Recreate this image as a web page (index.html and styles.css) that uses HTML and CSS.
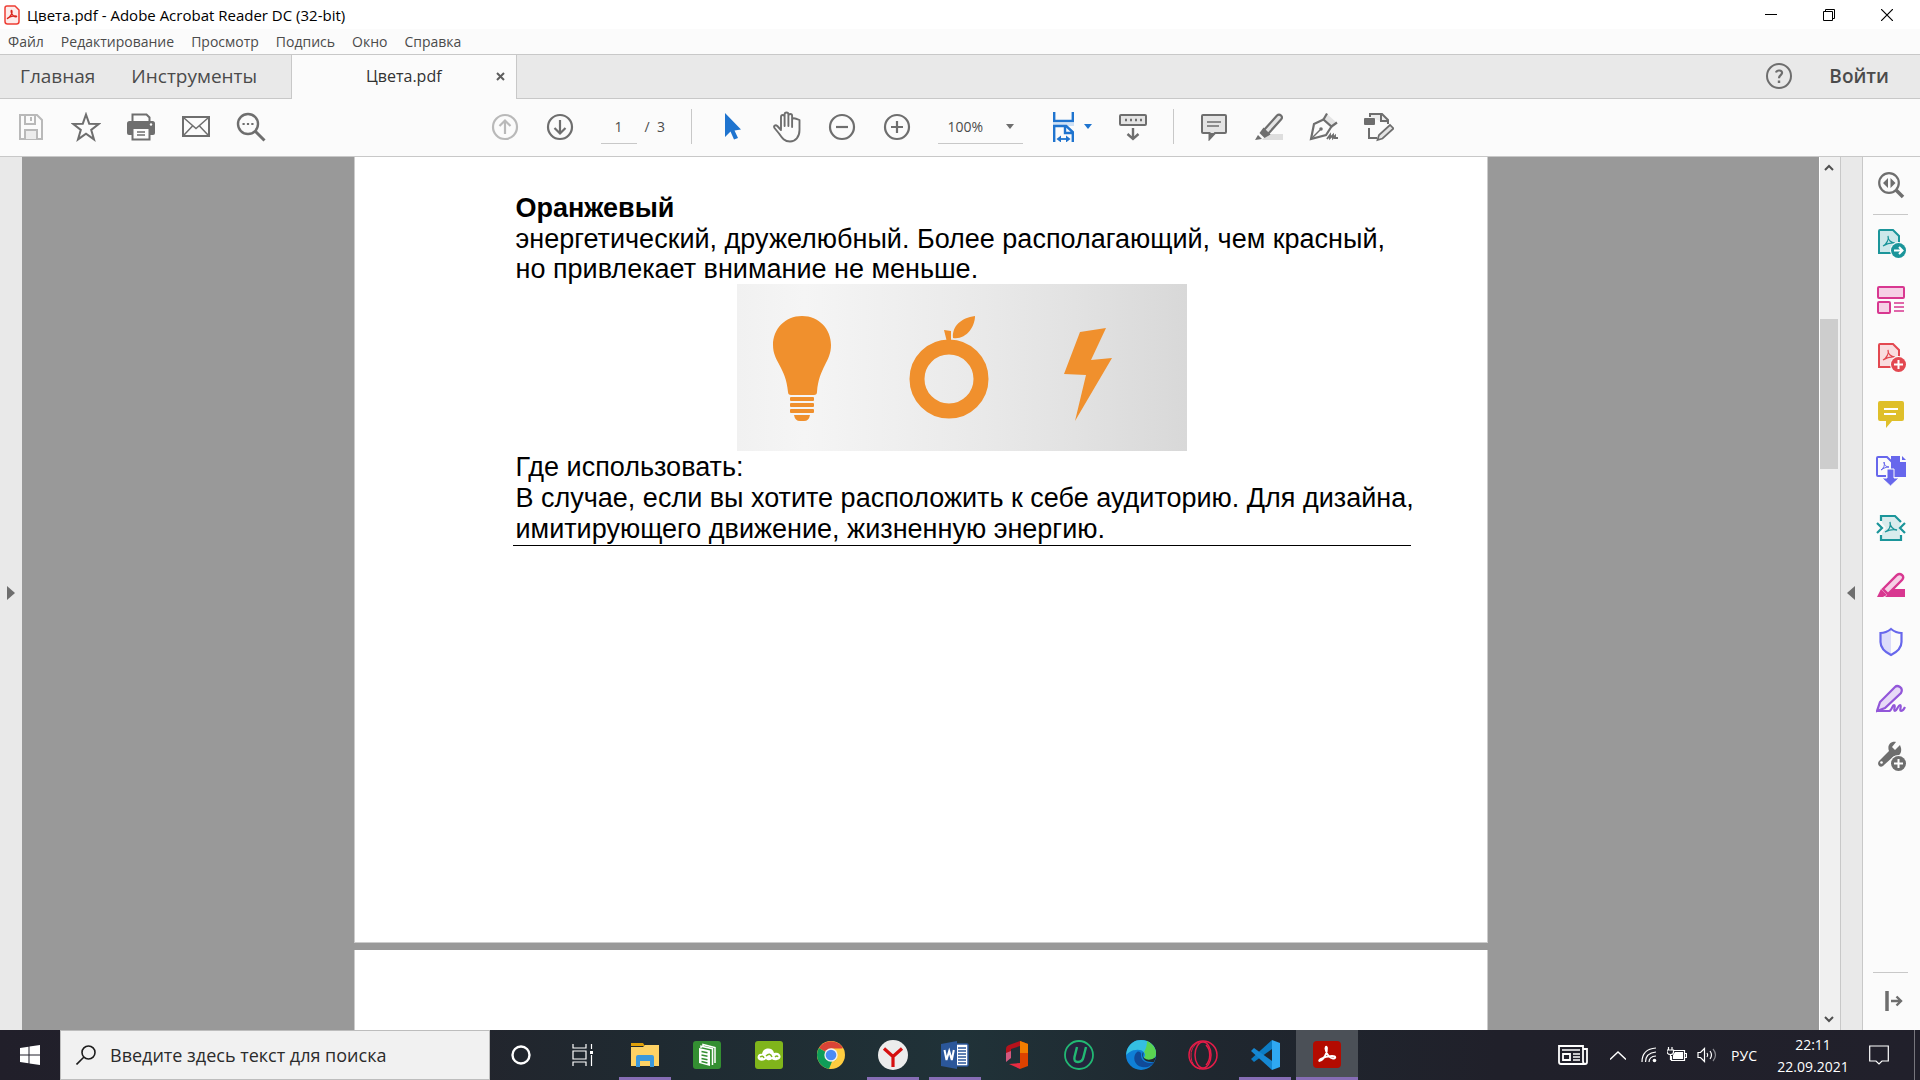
FILE: index.html
```html
<!DOCTYPE html>
<html lang="ru">
<head>
<meta charset="utf-8">
<title>Цвета.pdf - Adobe Acrobat Reader DC (32-bit)</title>
<link rel="stylesheet" href="styles.css">
</head>
<body>
<div class="app">
  <header class="titlebar">
    <svg class="app-icon" width="16" height="20" viewBox="0 0 16 20"><path d="M3 1h8l4 4v11.500q0 2.500-2.500 2.500h-9Q1 19 1 16.500V3q0-2 2-2z" fill="#fdeceb" stroke="#ee3e34" stroke-width="1.500"/><path d="M3.500 13.500c3-1.500 5-5.500 4.500-7.500-.8-1.500-1.500.5 0 3 1.300 2.200 3 3.200 4.500 2.700.8-1-3-1.500-8 .8-1 .5-1.200 1-1 1z" fill="none" stroke="#d9251c" stroke-width="1.300"/></svg>
    <h1 class="title">Цвета.pdf - Adobe Acrobat Reader DC (32-bit)</h1>
    <div class="window-buttons">
      <button class="win-btn" aria-label="Свернуть"><svg width="12" height="12" viewBox="0 0 12 12"><path d="M0 5.500h12" stroke="#000"/></svg></button>
      <button class="win-btn" aria-label="Восстановить"><svg width="12" height="12" viewBox="0 0 12 12" fill="none" stroke="#000"><path d="M.5 2.500h9v9h-9zM2.500 2.500v-2h9v9h-2"/></svg></button>
      <button class="win-btn" aria-label="Закрыть"><svg width="12" height="12" viewBox="0 0 12 12"><path d="M0 0l12 12M12 0L0 12" stroke="#000" stroke-width="1.200"/></svg></button>
    </div>
  </header>

  <nav class="menubar">
    <button>Файл</button><button>Редактирование</button><button>Просмотр</button><button>Подпись</button><button>Окно</button><button>Справка</button>
  </nav>

  <div class="tabbar">
    <div class="main-tabs">
      <button class="tab-link">Главная</button>
      <button class="tab-link">Инструменты</button>
    </div>
    <div class="doc-tab">
      <button class="doc-name">Цвета.pdf</button>
      <button class="doc-close" aria-label="Закрыть вкладку"><svg width="9" height="9" viewBox="0 0 9 9"><path d="M1 1l7 7M8 1L1 8" stroke="#5e5e5e" stroke-width="2"/></svg></button>
    </div>
    <div class="account">
      <button class="help" aria-label="Справка"><svg width="28" height="28" viewBox="0 0 28 28" fill="none" stroke="#6e6e6e" stroke-width="2"><circle cx="14" cy="14" r="12"/><path d="M11 10.500c1-3 6.500-2.500 6 .7-.3 2-3 2-3 5" stroke-width="2.200"/><path d="M14 18.500v2.500" stroke-width="2.400"/></svg></button>
      <button class="sign-in">Войти</button>
    </div>
  </div>

  <div class="toolbar">
    <div class="tool-group">
      <button class="tool" aria-label="Сохранить"><svg width="28" height="28" viewBox="0 0 28 28" fill="none" stroke="#b9b9b9" stroke-width="2"><path d="M3 2h17l5 5v19H3z"/><path d="M8 2v9h10V2"/><path d="M8 26v-9h12v9" fill="#ececec"/><path d="M14 4v4" /></svg></button>
      <button class="tool" aria-label="Избранное"><svg width="30" height="30" viewBox="0 0 30 30"><path d="M15 2.500l3.200 9.200 9.800.2-7.800 6 2.800 9.500-8-5.700-8 5.700 2.800-9.500-7.800-6 9.800-.2z" fill="none" stroke="#6e6e6e" stroke-width="2"/></svg></button>
      <button class="tool" aria-label="Печать"><svg width="28" height="28" viewBox="0 0 28 28"><path d="M5.500 9V1.500h14l3 3V9" fill="#fbfbfb" stroke="#6e6e6e" stroke-width="2"/><path d="M2.500 8h23Q28 8 28 10.500V20q0 2-2 2H2q-2 0-2-2v-9.500Q0 8 2.500 8z" fill="#6e6e6e"/><path d="M5.500 15h17v11.500h-17z" fill="#fbfbfb" stroke="#6e6e6e" stroke-width="2"/><path d="M10 19h8M10 22h8" stroke="#6e6e6e" stroke-width="1.400"/><circle cx="24" cy="11.500" r="1.200" fill="#fbfbfb"/></svg></button>
      <button class="tool" aria-label="Отправить по почте"><svg width="28" height="28" viewBox="0 0 28 28" fill="none" stroke="#6e6e6e"><path d="M1 4h26v19H1z" stroke-width="2"/><path d="M2 5l12 10.500L26 5M2 22l8.500-9M26 22l-8.500-9" stroke-width="1.500"/></svg></button>
      <button class="tool" aria-label="Найти"><svg width="30" height="30" viewBox="0 0 30 30" fill="none" stroke="#6e6e6e"><circle cx="12" cy="12" r="10" stroke-width="2.400"/><path d="M19.500 19.500l9 9" stroke-width="3"/><path d="M6.500 12h11" stroke-width="2.200" stroke-dasharray="2.200 2.200"/></svg></button>
    </div>
    <div class="tool-group">
      <button class="tool" aria-label="Предыдущая страница"><svg width="28" height="28" viewBox="0 0 28 28" fill="none" stroke="#b9b9b9" stroke-width="2.200"><circle cx="14" cy="14" r="12"/><path d="M14 21V8M8.500 13L14 7.500l5.500 5.500"/></svg></button>
      <button class="tool" aria-label="Следующая страница"><svg width="28" height="28" viewBox="0 0 28 28" fill="none" stroke="#6e6e6e" stroke-width="2.200"><circle cx="14" cy="14" r="12"/><path d="M14 7v13M8.500 15l5.500 5.500 5.500-5.500"/></svg></button>
      <div class="pager">
        <input class="page-input" type="text" value="1" aria-label="Номер страницы">
        <span class="page-total">/&nbsp; 3</span>
      </div>
      <span class="separator"></span>
      <button class="tool" aria-label="Выделение"><svg width="28" height="30" viewBox="0 0 28 30"><path d="M7 1v24l5.500-5.500L16 27.500l4-1.500-3.500-7.500 6.500-1z" fill="#1f74cf"/></svg></button>
      <button class="tool" aria-label="Рука"><svg width="30" height="32" viewBox="0 0 30 32" fill="none" stroke="#6e6e6e" stroke-width="1.900" stroke-linejoin="round" stroke-linecap="round"><path d="M9 18V6q0-2 1.800-2t1.800 2v9V3.500Q12.600 1.500 14.500 1.500t1.900 2V15 5q0-2 1.900-2t1.800 2v11V9q0-1.800 1.700-1.800T27.500 9v10c0 7-4 11.500-9.500 11.500S10 27 7 22.500L2.500 17c-1.300-2.200 1-3.500 2.800-2L9 19"/></svg></button>
      <button class="tool" aria-label="Уменьшить"><svg width="28" height="28" viewBox="0 0 28 28" fill="none" stroke="#6e6e6e" stroke-width="2.200"><circle cx="14" cy="14" r="12"/><path d="M8 14h12"/></svg></button>
      <button class="tool" aria-label="Увеличить"><svg width="28" height="28" viewBox="0 0 28 28" fill="none" stroke="#6e6e6e" stroke-width="2.200"><circle cx="14" cy="14" r="12"/><path d="M8 14h12M14 8v12"/></svg></button>
      <div class="zoom">
        <select class="zoom-select" aria-label="Масштаб"><option>100%</option></select>
        <svg width="8" height="5" viewBox="0 0 8 5"><path d="M0 0h8L4 5z" fill="#6e6e6e"/></svg>
      </div>
      <button class="tool tool-fit" aria-label="По ширине"><svg width="28" height="30" viewBox="0 0 28 30"><path d="M4.200 0v9h18.600V0" fill="none" stroke="#1f74cf" stroke-width="2.400"/><path d="M3 11h21v3H3z" fill="#cfe1f5"/><path d="M4.200 30V14h12l6.600 6v10M15 14v7h8" fill="none" stroke="#1f74cf" stroke-width="2.400"/><path d="M10 27h8" stroke="#1f74cf" stroke-width="1.800"/><path d="M11 23.500v7L6.500 27zM16 23.500v7l4.500-3.500z" fill="#1f74cf"/></svg><svg width="8" height="5" viewBox="0 0 8 5"><path d="M0 0h8L4 5z" fill="#1f74cf"/></svg></button>
      <button class="tool" aria-label="Панель прокрутки"><svg width="28" height="28" viewBox="0 0 28 28" fill="none" stroke="#6e6e6e"><rect x="1" y="2" width="26" height="10" rx="1" fill="#e4e4e4" stroke-width="2"/><path d="M6 7h17" stroke-width="2.500" stroke-dasharray="2 3"/><path d="M14 15v11M8.500 21l5.500 5 5.500-5" stroke-width="2.400"/></svg></button>
      <span class="separator"></span>
      <button class="tool" aria-label="Комментарий"><svg width="28" height="28" viewBox="0 0 28 28"><path d="M3 2h22q1 0 1 1v16q0 1-1 1H15l-5.500 6v-6H3q-1 0-1-1V3q0-1 1-1z" fill="#e4e4e4" stroke="#6e6e6e" stroke-width="2"/><path d="M9.500 20v6.500l6-6.500z" fill="#6e6e6e"/><path d="M7 9h14M7 13h12" stroke="#6e6e6e" stroke-width="1.300"/></svg></button>
      <button class="tool" aria-label="Выделить текст"><svg width="28" height="28" viewBox="0 0 28 28"><path d="M12 21h16v6H7z" fill="#dedede"/><path d="M9 17L22 2.500q2-2 4 0t0 4L13 21z" fill="#e4e4e4" stroke="#6e6e6e" stroke-width="2.200"/><path d="M8.500 14.500l7 7-6 3.500-5-5z" fill="#6e6e6e"/><path d="M3 22l4 4-7 1z" fill="#6e6e6e"/></svg></button>
      <button class="tool" aria-label="Подписать"><svg width="30" height="30" viewBox="0 0 30 30" fill="none" stroke="#6e6e6e" stroke-width="2.200"><path d="M18 2l9 8-4 4-8-7z" fill="#e4e4e4" stroke="none"/><path d="M18 1.500l-3.500 6 8 7 5.500-4" /><path d="M14.500 7.500L5 12 2 27l15-4 5.500-8.500"/><path d="M2 27l9-9" stroke-width="1.400"/><circle cx="12" cy="17" r="1.800" fill="#6e6e6e" stroke="none"/><path d="M18 27l3-4v3l3-3v3l2-2v2h3" stroke-width="1.900"/></svg></button>
      <button class="tool" aria-label="Другие инструменты"><svg width="30" height="30" viewBox="0 0 30 30" fill="none" stroke="#6e6e6e" stroke-width="2"><path d="M6 5V2h12l6 6v4" fill="#ededed"/><path d="M17 2v7h7M5 16v10h8"/><rect x="0" y="6" width="11" height="7" rx="1" fill="#6e6e6e" stroke="none"/><path d="M13.500 28l1.500-5 11-10 3.500 3.500-11 10z" fill="#e4e4e4" stroke-width="1.700"/></svg></button>
    </div>
  </div>

  <main class="workspace">
    <button class="side-toggle" aria-label="Показать панель навигации"><svg width="8" height="14" viewBox="0 0 8 14"><path d="M0 0v14l8-7z" fill="#6e6e6e"/></svg></button>
    <div class="canvas">
      <article class="sheet sheet-current">
        <h2 class="heading">Оранжевый</h2>
        <p class="intro">энергетический, дружелюбный. Более располагающий, чем красный,<br>но привлекает внимание не меньше.</p>
        <figure class="figure">
          <svg width="450" height="167" viewBox="0 0 450 167" fill="#f0902d" role="img" aria-label="Лампочка, апельсин, молния">
            <path d="M65 32c17 0 29 13 29 29 0 17-12 22-14 47q0 3-3 3H54q-3 0-3-3C49 83 36 78 36 61c0-16 12-29 29-29z"/>
            <rect x="53" y="113" width="24" height="4" rx="1"/><rect x="53" y="119" width="24" height="4" rx="1"/><rect x="53" y="125" width="24" height="4" rx="1"/>
            <path d="M57 131h16q-1 6-6 6h-4q-5 0-6-6z"/>
            <circle cx="212" cy="95" r="32" fill="none" stroke="#f0902d" stroke-width="15"/>
            <path d="M207 46l7 1v11h-4zM216 54c-1-12 8-20 22-22 0 11-9 24-22 22z"/>
            <path d="M343 48l26-4-15 32 21-2-37 63 11-46-22-1z"/>
          </svg>
        </figure>
        <p class="usage">Где использовать:<br>В случае, если вы хотите расположить к себе аудиторию. Для дизайна,<br>имитирующего движение, жизненную энергию.</p>
      </article>
      <article class="sheet sheet-next"></article>
    </div>
    <div class="scrollbar">
      <svg class="scroll-arrow" width="10" height="8" viewBox="0 0 10 8"><path d="M1 7l4-4 4 4" fill="none" stroke="#505050" stroke-width="2"/></svg>
      <div class="scroll-thumb"></div>
      <svg class="scroll-arrow scroll-down" width="10" height="8" viewBox="0 0 10 8"><path d="M1 1l4 4 4-4" fill="none" stroke="#505050" stroke-width="2"/></svg>
    </div>
    <button class="side-toggle side-right" aria-label="Скрыть панель инструментов"><svg width="8" height="14" viewBox="0 0 8 14"><path d="M8 0v14L0 7z" fill="#6e6e6e"/></svg></button>
    <aside class="tools-pane">
      <button aria-label="Поиск"><svg width="30" height="30" viewBox="0 0 30 30"><circle cx="13" cy="13" r="9.800" fill="none" stroke="#6e6e6e" stroke-width="2.200"/><path d="M20 20l7 7" stroke="#6e6e6e" stroke-width="3.600"/><path d="M12 8v10l-5-5zM14.500 8v10l5-5z" fill="#6e6e6e"/></svg></button>
      <span class="pane-rule"></span>
      <button aria-label="Экспорт PDF"><svg width="30" height="30" viewBox="0 0 30 30"><path d="M4 2h13l6 6v17H3V3q0-1 1-1z" fill="#cde8ea" stroke="#1b959a" stroke-width="2"/><path d="M7 18c4-2 6-7 5-10 0 4 3 7 7 7-4-.5-8 .5-12 3z" fill="none" stroke="#1b959a" stroke-width="1.200"/><circle cx="22.500" cy="22.500" r="8.500" fill="#fbfbfb"/><circle cx="22.500" cy="22.500" r="7.500" fill="#1b959a"/><path d="M18 22.500h8M23 19l3.500 3.500L23 26" fill="none" stroke="#fff" stroke-width="2"/></svg></button>
      <button aria-label="Систематизировать"><svg width="30" height="30" viewBox="0 0 30 30" fill="#f6d0e6" stroke="#d83790" stroke-width="2"><rect x="2" y="2" width="26" height="11" rx="1"/><rect x="2" y="17" width="12" height="11" rx="1"/><path d="M18 18h10M18 22h10M18 26h10" stroke-width="1.300"/></svg></button>
      <button aria-label="Создать PDF"><svg width="30" height="30" viewBox="0 0 30 30"><path d="M4 2h13l6 6v17H3V3q0-1 1-1z" fill="#f9dcde" stroke="#e34850" stroke-width="2"/><path d="M7 18c4-2 6-7 5-10 0 4 3 7 7 7-4-.5-8 .5-12 3z" fill="none" stroke="#e34850" stroke-width="1.200"/><circle cx="22.500" cy="22.500" r="8.500" fill="#fbfbfb"/><circle cx="22.500" cy="22.500" r="7.500" fill="#e34850"/><path d="M18 22.500h9M22.500 18v9" stroke="#fff" stroke-width="2"/></svg></button>
      <button aria-label="Добавить комментарий"><svg width="30" height="30" viewBox="0 0 30 30"><path d="M4 2h22q2 0 2 2v16q0 2-2 2H16l-6 7v-7H4q-2 0-2-2V4q0-2 2-2z" fill="#dfbf2a"/><path d="M8 10h14M8 15h12" stroke="#fff" stroke-width="2"/></svg></button>
      <button aria-label="Объединить файлы"><svg width="30" height="30" viewBox="0 0 30 30"><path d="M15 0h9v6h6v15H15z" fill="#6767ec"/><path d="M26 0l4 4h-4z" fill="#6767ec"/><path d="M10 20H2q-1 0-1-1V2q0-1 1-1h9l5 5v8" fill="#fbfbfb" stroke="#6767ec" stroke-width="2"/><path d="M5 14c3-2 4-5 3-8 0 3 2 5 5 5-3 0-5 1-8 3z" fill="none" stroke="#6767ec"/><path d="M11 13h7v9h5l-8.500 8L6 22h5z" fill="#6767ec" stroke="#fbfbfb"/></svg></button>
      <button aria-label="Сжать PDF"><svg width="30" height="30" viewBox="0 0 30 30" fill="none" stroke="#1b959a" stroke-width="2.200"><path d="M6 4h13l5 5v17H6v-6l4-5-4-5z" fill="#d9eced" stroke="none"/><path d="M1 10l5 5-5 5M29 10l-5 5 5 5M5 8V3h14l6 6M5 22v5h20v-5"/><path d="M9 19c4-2 6-6 5-10 0 4 3 8 7 8-4-1-8 0-12 2z" stroke-width="1.300"/></svg></button>
      <button aria-label="Редактировать PDF"><svg width="30" height="30" viewBox="0 0 30 30"><path d="M17 19h12v8H9z" fill="#d83790"/><path d="M7 19L21 5q2.500-2 5 0t0 5L12 24z" fill="#f6d0e6" stroke="#d83790" stroke-width="2.400"/><path d="M5 19l6 6-4 2H1z" fill="#d83790"/></svg></button>
      <button aria-label="Защитить"><svg width="30" height="30" viewBox="0 0 30 30"><path d="M15 2L4 6v9c0 6 5 10 11 13z" fill="#dcdcfa"/><path d="M15 2q5 4 10.500 4v9c0 6-4.500 10-10.500 13C9 25 4.500 21 4.500 15V6Q10 6 15 2z" fill="none" stroke="#6767ec" stroke-width="2.200"/></svg></button>
      <button aria-label="Заполнить и подписать"><svg width="30" height="30" viewBox="0 0 30 30" fill="none" stroke="#9256d9" stroke-width="2.200"><path d="M1 27l3-9L19 3q2-2 5 0t1 6L9 24z" fill="#e7daf7"/><path d="M1 27h12c3 0 3-6 5-6s-1 6 1 6 3-6 5-6-1 6 1 6 3-2 4-4"/></svg></button>
      <button aria-label="Дополнительные инструменты"><svg width="30" height="30" viewBox="0 0 30 30"><path d="M24 4l-5 5-3-3 4-5c-6-1-9 4-7 9L3 20c-3 4 2 8 5 4l10-9c5 1 8-3 7-8z" fill="#6e6e6e"/><circle cx="5.500" cy="21.500" r="1.300" fill="#fff"/><circle cx="22.500" cy="22.500" r="8.500" fill="#fbfbfb"/><circle cx="22.500" cy="22.500" r="7.500" fill="#6e6e6e"/><path d="M18 22.500h9M22.500 18v9" stroke="#fff" stroke-width="2"/></svg></button>
      <span class="pane-rule pane-rule-end"></span>
      <button class="pane-collapse" aria-label="Свернуть панель"><svg width="18" height="20" viewBox="0 0 18 20" stroke="#6e6e6e" fill="none"><path d="M2 0v20" stroke-width="3.500"/><path d="M6 10h10M11.500 5.500L16 10l-4.500 4.500" stroke-width="2.400"/></svg></button>
    </aside>
  </main>

  <footer class="taskbar">
    <button class="start" aria-label="Пуск"><svg width="20" height="20" viewBox="0 0 20 20" fill="#fff"><path d="M0 3l8.500-1.300v7.800H0zM9.500 1.500L20 0v9.500H9.500zM0 10.500h8.500v7.800L0 17zM9.500 10.500H20V20L9.500 18.500z"/></svg></button>
    <label class="search"><svg width="20" height="20" viewBox="0 0 20 20" fill="none" stroke="#1c1c1c" stroke-width="1.600"><circle cx="12.500" cy="7.500" r="6.500"/><path d="M8 12l-7.500 7.500"/></svg><input type="text" placeholder="Введите здесь текст для поиска" aria-label="Поиск"></label>
    <div class="task-apps">
      <button aria-label="Кортана"><svg width="20" height="20" viewBox="0 0 20 20"><circle cx="10" cy="10" r="8.500" fill="none" stroke="#fff" stroke-width="2.400"/></svg></button>
      <button aria-label="Представление задач"><svg width="22" height="22" viewBox="0 0 22 22" fill="none" stroke="#fff" stroke-width="1.200"><path d="M1 0v4h13V0M1 7h13v8H1zM1 22v-4h13v4M19.500 0v5M19.500 11v11"/><path d="M18 7h3v3h-3z" fill="#fff" stroke="none"/></svg></button>
      <button class="running" aria-label="Проводник"><svg width="28" height="26" viewBox="0 0 28 26"><path d="M0 1h12l2 3H0z" fill="#e0a008"/><path d="M0 5h12l2-2h14v21H0z" fill="#fed264"/><path d="M5 25V15q0-2 2-2h14q2 0 2 2v10h-4v-6H9v6z" fill="#3b98dc"/></svg></button>
      <button aria-label="Библиотека"><svg width="28" height="28" viewBox="0 0 28 28"><rect width="28" height="28" rx="3" fill="#348f32"/><path d="M10 5V3.500l12 3V22" fill="none" stroke="#fff" stroke-width="1.500"/><path d="M8 7V5.200l11.500 2.500V24" fill="none" stroke="#fff" stroke-width="1.500"/><path d="M6 7l11 2.500V25L6 22z" fill="#fff"/><path d="M8.500 10.500l6 1.300M8.500 14l6 1.300M8.500 17.500l6 1.300M8.500 20.500l6 1.500" stroke="#348f32" stroke-width="1.500"/></svg></button>
      <button aria-label="Облако"><svg width="28" height="28" viewBox="0 0 28 28"><rect width="28" height="28" rx="3" fill="#80b51b"/><path d="M4 19c-3-2-1-7 3-6 1-7 11-7 12-1 7-2 9 6 3 7-3 1-5-1-5-1s-3 3-6 0c-2 2-5 2-7 1z" fill="#fff"/><path d="M5 16q3-2 4 1M11 15q4-4 6 1M20 16q2-2 3 0" fill="none" stroke="#80b51b" stroke-width="1.400"/></svg></button>
      <button aria-label="Chrome"><svg width="28" height="28" viewBox="0 0 28 28"><circle cx="14" cy="14" r="14" fill="#ffcd40"/><path d="M14 14L2 7a14 14 0 0 1 24.100 0z" fill="#db4437"/><path d="M1.900 7a14 14 0 0 0 11.100 21l7-11-6-3z" fill="#0f9d58"/><path d="M14 7.500h12.300L20 17l-6 11-2 0 4-10z" fill="#ffcd40"/><circle cx="14" cy="14" r="6.700" fill="#f1f1f1"/><circle cx="14" cy="14" r="5.300" fill="#4c8bf5"/></svg></button>
      <button class="running" aria-label="Яндекс Браузер"><svg width="30" height="30" viewBox="0 0 30 30"><circle cx="15" cy="15" r="15" fill="#ececec"/><path d="M6 8.500l9 8 9-8M15 16v11" fill="none" stroke="#d61010" stroke-width="3.200"/></svg></button>
      <button class="running" aria-label="Word"><svg width="28" height="28" viewBox="0 0 28 28"><path d="M14 3h12q1 0 1 1v20q0 1-1 1H14z" fill="#fff" stroke="#2b579a" stroke-width="1.500"/><path d="M17 7h8M17 10h8M17 13h8M17 16h8M17 19h8M17 22h8" stroke="#2b579a" stroke-width="1.500"/><path d="M0 3l16-3v28L0 25z" fill="#2b579a"/><path d="M3.500 9l2 10L8.200 10l2.600 9 2-10" fill="none" stroke="#fff" stroke-width="2"/></svg></button>
      <button aria-label="Office"><svg width="24" height="30" viewBox="0 0 24 30"><path d="M15 1l8 3v22l-8 3z" fill="#dc4200"/><path d="M15 1l8 3v9h-8z" fill="#f07d00"/><path d="M15 1L4 5q-3 1-3 4v11l5-2V9l9-3z" fill="#b5121b"/><path d="M1 13v9l5-4v-7z" fill="#d3597f"/><path d="M4 24l11-1v6z" fill="#e82b42"/></svg></button>
      <button aria-label="Uninstaller"><svg width="30" height="30" viewBox="0 0 30 30" fill="none"><circle cx="15" cy="15" r="14" fill="#24253d" stroke="#22b873" stroke-width="1.800"/><path d="M13 7L10.500 17q-1 5 3.500 5t5.500-5L22 7" stroke="#22b873" stroke-width="2.400"/></svg></button>
      <button aria-label="Edge"><svg width="30" height="30" viewBox="0 0 30 30"><circle cx="15" cy="15" r="15" fill="#0f80d7"/><path d="M1 10C4 3 9 0 15 0c9 0 15 6 15 13 0 8-9 9-12 5 3-6-3-9-8-8-4 0-7 2-10 5z" fill="#35bfe2"/><path d="M21 1c6 3 9 8 9 12 0 8-9 9-12 5 2-3 1-5 0-6 2-3 3-7 3-11z" fill="#5ad451"/><path d="M11 12c-5 4-3 14 5 15 5 1 10-1 12-5-6 3-14-1-13-8 0-2-2-3-4-2z" fill="#104a98"/><path d="M30 17q-7 5-12 1c-2-2 0-4-1-6-2 5 1 11 11 10z" fill="#1f2930"/></svg></button>
      <button aria-label="Opera"><svg width="30" height="30" viewBox="0 0 30 30" fill="none" stroke="#e51c48" stroke-width="1.500"><circle cx="15" cy="15" r="14"/><ellipse cx="15" cy="15" rx="8" ry="13"/><path d="M18 5c5 5 5 15 0 20"/><path d="M11 2q-9 5-8 15t9 12" stroke-width="1"/></svg></button>
      <button class="running" aria-label="VS Code"><svg width="30" height="30" viewBox="0 0 30 30"><path d="M22 0l8 3v24l-8 3z" fill="#2fa8f2"/><path d="M22 0v9L4 22l-3-3z" fill="#0c7cc4"/><path d="M22 30v-9L4 8l-3 3z" fill="#1688d3"/></svg></button>
      <button class="running active" aria-label="Acrobat"><svg width="28" height="28" viewBox="0 0 28 28"><rect width="28" height="27" rx="4" fill="#b30b00"/><path d="M6.500 20c4-1 8-8 7.500-13-.5-2.500-2.500-1-1 3 1.300 4 4 7 7 7.500 3 0 3.500-2.500-1-2.500-4 0-8 1-11.500 3-1.500 1-1.500 2-1 2z" fill="none" stroke="#fff" stroke-width="1.800"/></svg></button>
    </div>
    <div class="tray">
      <button class="tray-news" aria-label="Новости"><svg width="30" height="20" viewBox="0 0 30 20" fill="none" stroke="#fff" stroke-width="1.800"><path d="M1 1h24v15q0 3 2 3H3q-2 0-2-2z"/><path d="M25 4h4v13q0 2-2 2"/><path d="M4 5h18M15 9h7M15 12h7M15 15h7" stroke-width="1.400"/><path d="M5 9h7v6H5z"/></svg></button>
      <button class="tray-more" aria-label="Скрытые значки"><svg width="16" height="9" viewBox="0 0 16 9"><path d="M0 8.500L8 1l8 7.500" fill="none" stroke="#fff" stroke-width="1.400"/></svg></button>
      <button aria-label="Сеть"><svg width="16" height="16" viewBox="0 0 16 16" fill="none" stroke="#fff" stroke-width="1.200"><path d="M1 15Q1 2 15 1M4.500 15Q4.500 6 15 5M8 15q0-5.500 7-6"/><circle cx="13.500" cy="13.500" r="1.800" fill="#fff" stroke="none"/></svg></button>
      <button aria-label="Батарея"><svg width="20" height="16" viewBox="0 0 20 16" fill="none" stroke="#fff" stroke-width="1.200"><path d="M7 3.500h10.500v10h-13V9"/><path d="M8 5h8v7H6V8z" fill="#fff" stroke="none"/><path d="M18 6.500h1.500v4H18M1.500 0v3M5 0v3M0 3h6.500v2q0 2.500-3 2.500T0 5zM3.500 8v5"/></svg></button>
      <button aria-label="Громкость"><svg width="20" height="16" viewBox="0 0 20 16" fill="none" stroke="#fff" stroke-width="1.200"><path d="M1 5.500h2.500l4-4v13l-4-4H1zM10 6q1.500 2 0 4M13 4q3 4 0 8"/><path d="M16 2q5 6 0 12" stroke="#8a8a90"/></svg></button>
      <button class="lang">РУС</button>
      <button class="clock"><time datetime="22:11">22:11</time><time datetime="2021-09-22">22.09.2021</time></button>
      <button aria-label="Уведомления"><svg width="20" height="20" viewBox="0 0 20 20"><path d="M.7 1h18.600v15H13l-3 3-3-3H.7z" fill="none" stroke="#fff" stroke-width="1.200"/></svg></button>
    </div>
  </footer>
</div>
</body>
</html>
```
FILE: styles.css
```css
* { box-sizing: border-box; }
body {
  margin: 0;
  font-family: "Open Sans", "Noto Sans", sans-serif;
  color: #4b4b4b;
  background: #fff;
}
button, input, select { font: inherit; color: inherit; }
button { padding: 0; border: 0; background: none; }
svg { display: block; flex: none; }

.app { display: flex; flex-direction: column; height: 100vh; overflow: hidden; }

/* Window title */
.titlebar { display: flex; align-items: center; flex: none; height: 29px; padding-left: 4px; background: #fff; }
.title { margin: 0 0 0 7px; font-size: 15px; line-height: 20px; font-weight: 400; color: #000; }
.window-buttons { display: flex; margin-left: auto; padding-right: 4px; }
.win-btn { display: flex; align-items: center; justify-content: center; width: 58px; height: 28px; }

/* Menu */
.menubar { display: flex; align-items: center; flex: none; gap: 17px; height: 26px; padding-left: 8px; font-size: 14px; background: #fbfbfb; border-bottom: 1px solid #c8c8c8; }

/* Tabs */
.tabbar { display: flex; flex: none; height: 44px; background: #e9e9e9; }
.main-tabs { display: flex; align-items: center; gap: 36px; width: 291px; padding: 0 0 2px 20px; font-size: 19px; border-bottom: 1px solid #c8c8c8; }
.doc-tab { display: flex; align-items: center; width: 226px; padding: 0 11px 2px 74px; background: #fbfbfb; border: solid #c8c8c8; border-width: 0 1px; }
.doc-name { font-size: 16px; color: #323232; }
.doc-close { margin-left: auto; }
.account { display: flex; flex: 1; align-items: center; justify-content: flex-end; gap: 36px; padding: 0 31px 2px 0; border-bottom: 1px solid #c8c8c8; }
.sign-in { font-size: 19px; font-weight: 600; }

/* Toolbar */
.toolbar { display: grid; grid-template-columns: 1fr auto 1fr; flex: none; align-items: center; height: 58px; padding: 0 37px 2px 0; background: #fbfbfb; border-bottom: 1px solid #c8c8c8; }
.tool-group { display: flex; align-items: center; gap: 27px; }
.tool-group:first-child { padding-left: 17px; }
.tool { display: flex; align-items: center; justify-content: center; width: 28px; height: 32px; }
.tool-fit { gap: 6px; width: 42px; }
.separator { width: 1px; height: 35px; margin: 0 -1px; background: #c8c8c8; }
.pager { display: flex; align-items: center; gap: 8px; height: 35px; font-size: 14px; }
.page-input { width: 36px; height: 35px; padding: 0; border: 0; border-bottom: 1px solid #c8c8c8; text-align: center; background: none; }
.page-total { width: 20px; white-space: nowrap; }
.zoom { display: flex; align-items: center; width: 85px; height: 35px; padding-right: 9px; border-bottom: 1px solid #c8c8c8; }
.zoom-select { flex: 1; min-width: 0; padding: 0 0 0 10px; border: 0; appearance: none; background: none; font-size: 14px; }

/* Document area */
.workspace { display: flex; flex: 1; min-height: 0; }
.side-toggle { display: flex; align-items: center; justify-content: center; flex: none; width: 22px; padding-bottom: 2px; background: #e9e9e9; }
.side-right { width: 23px; padding-right: 2px; border: solid #c8c8c8; border-width: 0 1px; }
.canvas { display: flex; flex: 1; flex-direction: column; align-items: center; gap: 7px; min-width: 0; overflow: hidden; background: #999; }
.sheet { flex: none; width: 1134px; max-width: 100%; padding: 36px 76px 0 158px; background: #fff; border: 1px solid #ccc; border-top: 0; }
.sheet-current { height: 786px; color: #000; font-family: "Liberation Sans", Arial, sans-serif; font-size: 27px; line-height: 31px; }
.sheet-next { height: 1600px; }
.heading { margin: 0; padding-left: 3px; font-size: 27px; line-height: 31px; }
.intro { margin: 0; padding-left: 3px; line-height: 30px; }
.figure { width: 450px; margin: 0 auto; background: linear-gradient(90deg, #f1f1f1, #f5f5f5 15%, #e9e9e9 55%, #e2e2e2 75%, #d8d8d8); }
.usage { margin: 0; padding: 1px 0 0 3px; white-space: nowrap; border-bottom: 1px solid #000; }
.scrollbar { display: flex; flex: none; flex-direction: column; align-items: center; width: 21px; padding: 6px 2px 6px 0; background: #f0f0f0; border-left: 1px solid #fff; }
.scroll-thumb { width: 100%; height: 150px; margin-top: 148px; background: #cdcdcd; }
.scroll-down { margin-top: auto; }
.tools-pane { display: flex; flex: none; flex-direction: column; align-items: center; gap: 25px; width: 57px; padding: 12px 2px 13px 0; background: #fbfbfb; }
.tools-pane button { display: flex; align-items: center; justify-content: center; width: 32px; height: 32px; }
.pane-rule { width: 35px; height: 1px; margin: -12px 0 -13px; background: #c8c8c8; }
.pane-rule-end { margin-top: auto; }
.tools-pane .pane-collapse { margin-left: 6px; }

/* Taskbar */
.taskbar { display: flex; flex: none; height: 50px; color: #fff; background: linear-gradient(90deg, #211f2a 0, #22252d 25%, #1f2a31 34%, #203238 50%, #1f272f 63%, #20202a 78%, #21202b); }
.start { display: flex; align-items: center; justify-content: center; width: 60px; }
.search { display: flex; align-items: center; gap: 14px; width: 430px; padding-left: 15px; background: #f1f1f1; border: 1px solid #bdbdbd; }
.search input { flex: 1; min-width: 0; padding: 0; border: 0; background: none; color: #2b2b2b; font-size: 18px; }
.search input::placeholder { color: #2b2b2b; opacity: 1; }
.task-apps { display: flex; }
.task-apps button { display: flex; align-items: center; justify-content: center; width: 62px; }
.task-apps .running { width: 52px; margin: 0 5px; border-bottom: 3px solid #866db5; padding-top: 3px; }
.task-apps .active { width: 62px; margin: 0; background: #4b5057; }
.tray { display: flex; align-items: center; gap: 10px; margin: 0 5px 0 auto; padding-right: 25px; border-right: 1px solid #77767d; }
.tray-news { margin-right: 12px; }
.tray-more { margin-right: 5px; }
.lang { padding-left: 4px; font-size: 14px; }
.clock { display: flex; flex-direction: column; align-items: center; width: 92px; padding-top: 1px; font-size: 14px; line-height: 22px; }
```
